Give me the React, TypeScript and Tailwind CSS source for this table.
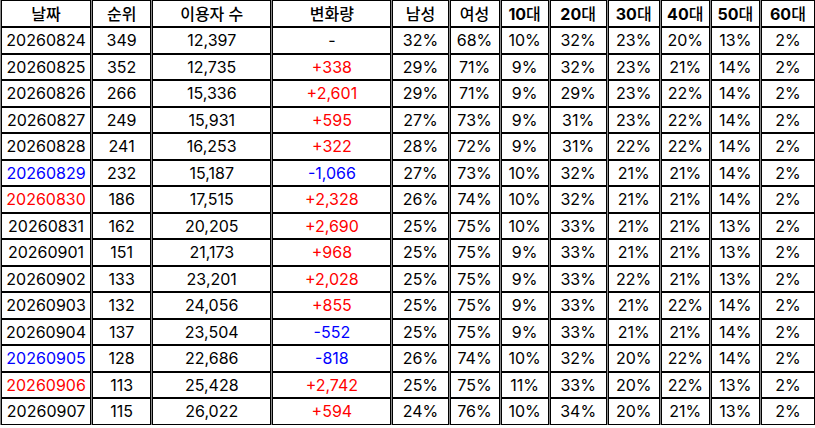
import React from "react";

type Row = { d: string; dc?: "r" | "b"; rank: string; users: string; delta: string; dl?: "r" | "b" | "k"; v: string[] };

const rows: Row[] = [
  { d: "20260824", rank: "349", users: "12,397", delta: "-", dl: "k", v: ["32%", "68%", "10%", "32%", "23%", "20%", "13%", "2%"] },
  { d: "20260825", rank: "352", users: "12,735", delta: "+338", v: ["29%", "71%", "9%", "32%", "23%", "21%", "14%", "2%"] },
  { d: "20260826", rank: "266", users: "15,336", delta: "+2,601", v: ["29%", "71%", "9%", "29%", "23%", "22%", "14%", "2%"] },
  { d: "20260827", rank: "249", users: "15,931", delta: "+595", v: ["27%", "73%", "9%", "31%", "23%", "22%", "14%", "2%"] },
  { d: "20260828", rank: "241", users: "16,253", delta: "+322", v: ["28%", "72%", "9%", "31%", "22%", "22%", "14%", "2%"] },
  { d: "20260829", dc: "b", rank: "232", users: "15,187", delta: "-1,066", dl: "b", v: ["27%", "73%", "10%", "32%", "21%", "21%", "14%", "2%"] },
  { d: "20260830", dc: "r", rank: "186", users: "17,515", delta: "+2,328", v: ["26%", "74%", "10%", "32%", "21%", "21%", "14%", "2%"] },
  { d: "20260831", rank: "162", users: "20,205", delta: "+2,690", v: ["25%", "75%", "10%", "33%", "21%", "21%", "13%", "2%"] },
  { d: "20260901", rank: "151", users: "21,173", delta: "+968", v: ["25%", "75%", "9%", "33%", "21%", "21%", "13%", "2%"] },
  { d: "20260902", rank: "133", users: "23,201", delta: "+2,028", v: ["25%", "75%", "9%", "33%", "22%", "21%", "13%", "2%"] },
  { d: "20260903", rank: "132", users: "24,056", delta: "+855", v: ["25%", "75%", "9%", "33%", "21%", "22%", "14%", "2%"] },
  { d: "20260904", rank: "137", users: "23,504", delta: "-552", dl: "b", v: ["25%", "75%", "9%", "33%", "21%", "21%", "14%", "2%"] },
  { d: "20260905", dc: "b", rank: "128", users: "22,686", delta: "-818", dl: "b", v: ["26%", "74%", "10%", "32%", "20%", "22%", "14%", "2%"] },
  { d: "20260906", dc: "r", rank: "113", users: "25,428", delta: "+2,742", v: ["25%", "75%", "11%", "33%", "20%", "22%", "13%", "2%"] },
  { d: "20260907", rank: "115", users: "26,022", delta: "+594", v: ["24%", "76%", "10%", "34%", "20%", "21%", "13%", "2%"] },
];

const widths = [90, 59, 119, 119, 56, 50, 48, 57, 52, 49, 49, 54];

const color = (c?: "r" | "b" | "k") =>
  c === "r" ? "text-[#ff0000]" : c === "b" ? "text-[#0000ff]" : "text-black";

const cell = "border border-black bg-white text-center p-0 h-[26.5px] leading-none";

export default function App() {
  return (
    <div className="w-[815px] h-[428px] bg-white overflow-hidden" style={{ fontFamily: 'Inter, "Noto Sans CJK KR", sans-serif' }}>
      <table className="table-fixed border-separate border-spacing-x-[1px] border-spacing-y-0 bg-[#8a8a8a] w-[816px] text-[16px] text-black">
        <colgroup>
          {widths.map((w, i) => (
            <col key={i} style={{ width: w }} />
          ))}
        </colgroup>
        <thead>
          <tr>
            {["날짜", "순위", "이용자 수", "변화량", "남성", "여성"].map((h) => (
              <th key={h} className={`${cell} h-[27px] font-medium`}>{h}</th>
            ))}
            {["10", "20", "30", "40", "50", "60"].map((h) => (
              <th key={h} className={`${cell} h-[27px] font-bold`}>
                {h}<span className="font-medium">대</span>
              </th>
            ))}
          </tr>
        </thead>
        <tbody>
          {rows.map((r) => (
            <tr key={r.d}>
              <td className={`${cell} ${color(r.dc)}`}>{r.d}</td>
              <td className={cell}>{r.rank}</td>
              <td className={cell}>{r.users}</td>
              <td className={`${cell} ${r.dl ? color(r.dl) : "text-[#ff0000]"}`}>{r.delta}</td>
              {r.v.map((x, i) => (
                <td key={i} className={cell}>{x}</td>
              ))}
            </tr>
          ))}
        </tbody>
      </table>
    </div>
  );
}
